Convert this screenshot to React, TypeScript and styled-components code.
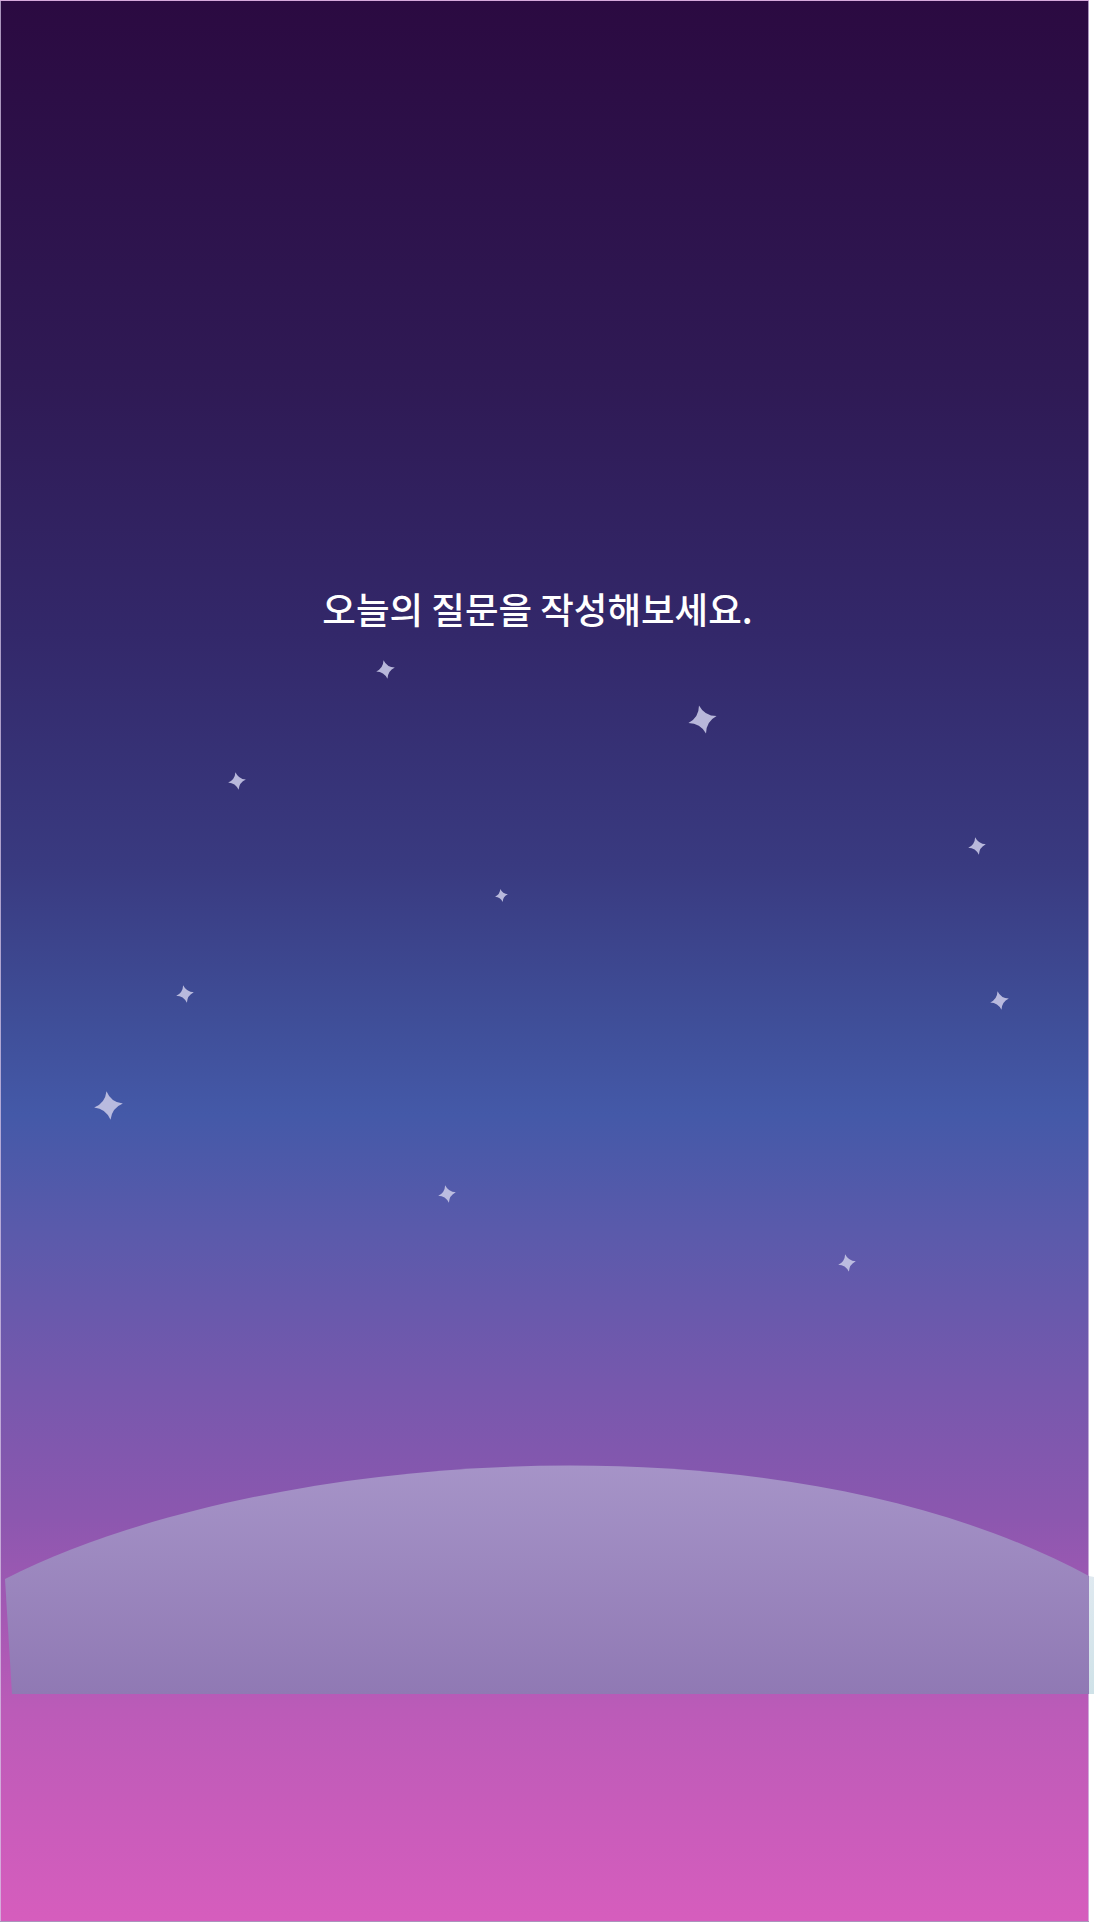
import React from "react";
import styled, { createGlobalStyle } from "styled-components";

const Global = createGlobalStyle`
  html, body { margin: 0; padding: 0; background: #ffffff; }
  body { font-family: "Noto Sans CJK KR", "Noto Sans", sans-serif; }
`;

const Screen = styled.main`
  position: relative;
  box-sizing: border-box;
  width: 1089px;
  height: 1922px;
  border: 1px solid rgba(214, 196, 230, 0.75);
  background: linear-gradient(
    180deg,
    #2b0a41 0%,
    #2f1a55 20%,
    #33286a 33%,
    #393a80 45%,
    #3f4e98 53%,
    #4459a8 58%,
    #5a5aab 64%,
    #7658ad 72%,
    #8c57af 79%,
    #bb5bb8 89%,
    #d65dbd 100%
  );
  display: flex;
  flex-direction: column;
  align-items: center;
  overflow: visible;
`;

const Title = styled.h1`
  margin: 582px 0 0 -14px;
  font-family: "Noto Sans CJK KR", "Noto Sans", sans-serif;
  font-size: 36.5px;
  font-weight: 500;
  line-height: 52px;
  color: #ffffff;
  letter-spacing: 0;
`;

const StarSvg = styled.svg<{ $x: number; $y: number; $size: number; $rot: number }>`
  position: absolute;
  left: ${(p) => p.$x - p.$size / 2}px;
  top: ${(p) => p.$y - p.$size / 2}px;
  width: ${(p) => p.$size}px;
  height: ${(p) => p.$size}px;
  transform: rotate(${(p) => p.$rot}deg);
  overflow: visible;
`;

const HillSvg = styled.svg`
  position: absolute;
  left: -1px;
  top: 1440px;
  width: 1096px;
  height: 280px;
  overflow: visible;
`;

const stars = [
  { x: 384, y: 668, s: 19, r: -12 },
  { x: 701, y: 718, s: 29, r: -14 },
  { x: 236, y: 780, s: 18, r: -10 },
  { x: 976, y: 845, s: 18, r: -12 },
  { x: 500, y: 894, s: 13, r: -10 },
  { x: 184, y: 993, s: 18, r: -12 },
  { x: 998, y: 999, s: 19, r: -12 },
  { x: 107, y: 1104, s: 29, r: -8 },
  { x: 446, y: 1193, s: 18, r: -12 },
  { x: 846, y: 1262, s: 18, r: -12 },
];

function Star({ x, y, s, r }: { x: number; y: number; s: number; r: number }) {
  return (
    <StarSvg $x={x} $y={y} $size={s} $rot={r} viewBox="-10 -10 20 20">
      <path
        d="M0,-10 Q2,-2 10,0 Q2,2 0,10 Q-2,2 -10,0 Q-2,-2 0,-10 Z"
        fill="#c6c6e6"
        fillOpacity={0.9}
      />
    </StarSvg>
  );
}

function Hill() {
  return (
    <HillSvg viewBox="0 1440 1096 280">
      <defs>
        <linearGradient id="hillFill" x1="0" y1="1460" x2="0" y2="1693" gradientUnits="userSpaceOnUse">
          <stop offset="0" stopColor="#a694c8" />
          <stop offset="1" stopColor="#9079b4" />
        </linearGradient>
        <linearGradient id="stripFill" x1="0" y1="1575" x2="0" y2="1693" gradientUnits="userSpaceOnUse">
          <stop offset="0" stopColor="#dfe9f0" />
          <stop offset="1" stopColor="#cfe2e8" />
        </linearGradient>
      </defs>
      <path d="M1089,1575 L1094,1576 L1094,1693 L1089,1693 Z" fill="url(#stripFill)" />
      <path
        d="M5,1578 C260,1448 780,1408 1089,1575 L1089,1693 L12,1693 Z"
        fill="url(#hillFill)"
      />
    </HillSvg>
  );
}

export default function App() {
  return (
    <>
      <Global />
      <Screen>
        <Title>오늘의 질문을 작성해보세요.</Title>
        {stars.map((st, i) => (
          <Star key={i} {...st} />
        ))}
        <Hill />
      </Screen>
    </>
  );
}
